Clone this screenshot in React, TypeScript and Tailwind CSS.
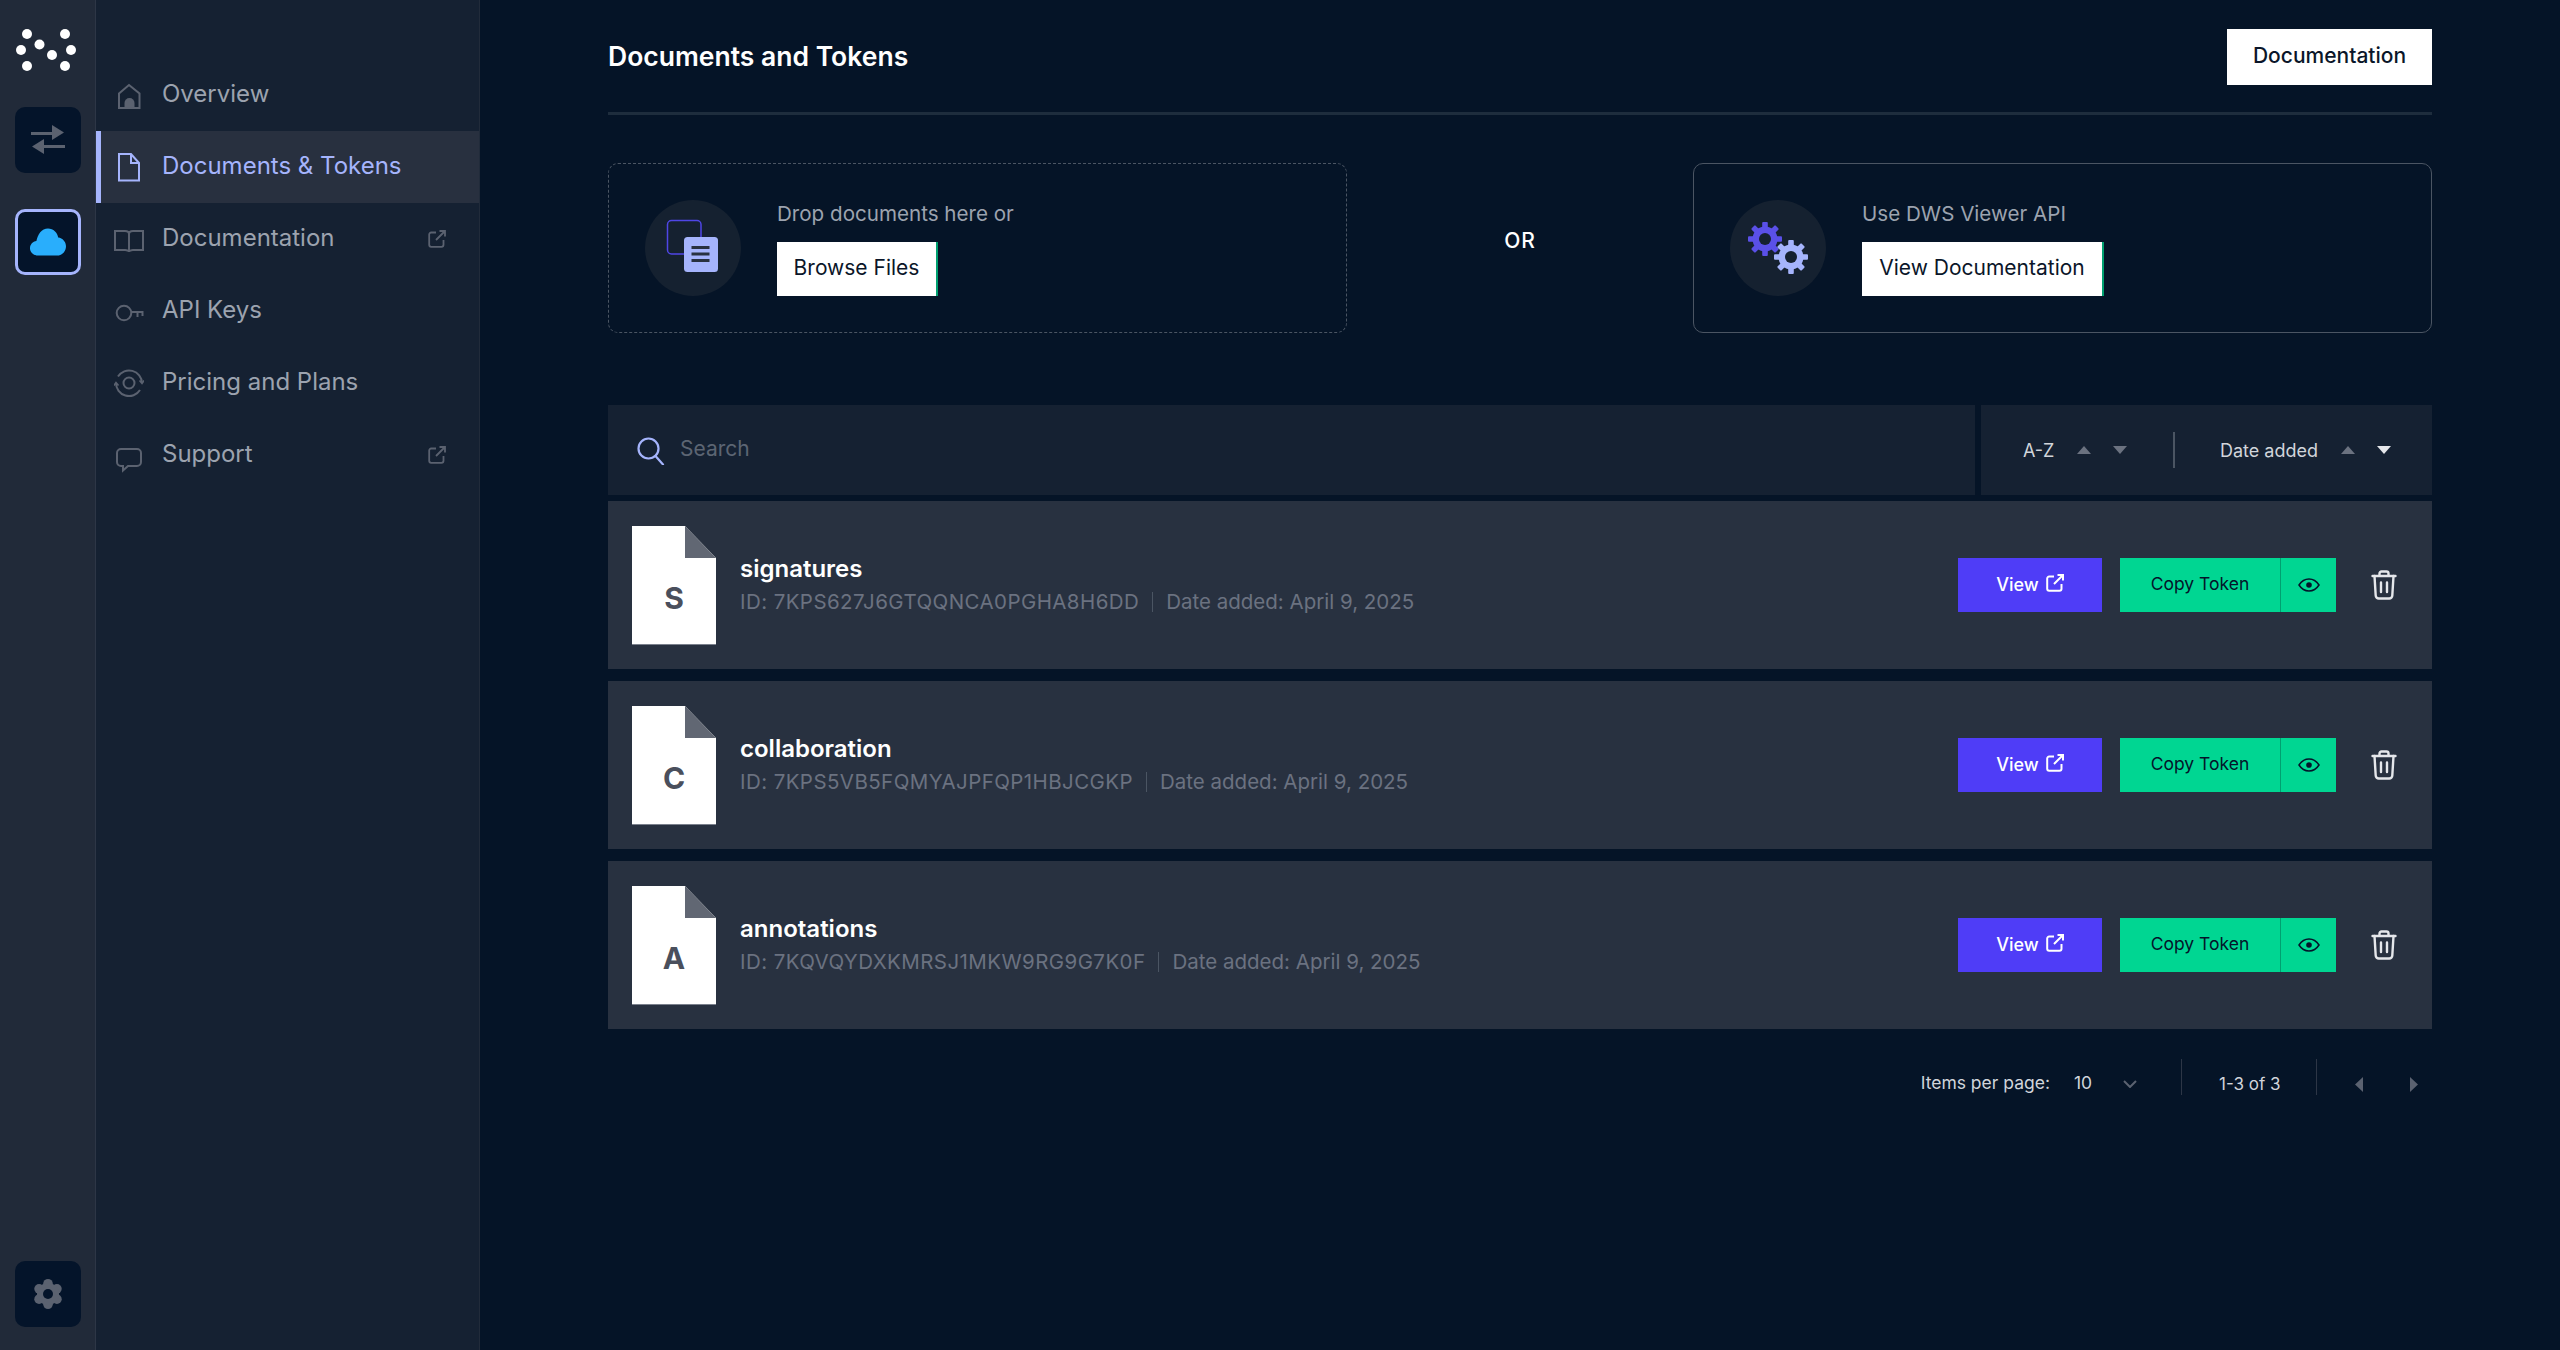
import React from "react";

const font = { fontFamily: "Inter, 'Liberation Sans', sans-serif" };

function Logo() {
  const dots = [[27, 34], [65, 34], [21, 50], [39.5, 44.5], [52, 55], [71, 50], [27, 66], [65, 66]];
  return (
    <svg width="96" height="107" viewBox="0 0 96 107" className="block shrink-0">
      {dots.map(([x, y], i) => <circle key={i} cx={x} cy={y} r="5" fill="#fff" />)}
    </svg>
  );
}

function Swap() {
  return (
    <svg width="36" height="32" viewBox="0 0 36 32" fill="#5b6270">
      <rect x="1" y="8" width="24" height="3" />
      <path d="M22 1L34 8.5 22 16z" />
      <rect x="11" y="21" width="24" height="3" />
      <path d="M14 15L2 22.5 14 30z" />
    </svg>
  );
}

function Cloud() {
  return (
    <svg width="38" height="30" viewBox="0 0 38 30" fill="#29aefc">
      <path d="M9 28.500C4.200 28.500 1 25.300 1 21.300c0-3.800 2.800-6.700 6.400-7.200C8.600 7.600 12.600 1.500 19 1.500c5.400 0 9.400 4.200 10.200 9 4.400.4 7.800 4.400 7.800 8.800 0 5-3.600 9.200-8.400 9.200z" />
    </svg>
  );
}

function RailGear() {
  const a = [-90, -30, 30, 90, 150, 210];
  return (
    <svg width="30" height="32" viewBox="-15 -16 30 32">
      {a.map((d) => (
        <circle key={d} cx={10.3 * Math.cos((d * Math.PI) / 180)} cy={10.3 * Math.sin((d * Math.PI) / 180)} r="4.8" fill="#5b6270" />
      ))}
      <circle r="11" fill="#5b6270" />
      <circle r="5" fill="#04142a" />
    </svg>
  );
}

const navStroke = { fill: "none", stroke: "currentColor", strokeWidth: 2 };

function HomeIcon() {
  return (
    <svg width="30" height="30" viewBox="0 0 30 30" {...navStroke}>
      <path d="M5 13.500L15 5l10.500 8.500V28H5z" />
      <path d="M10.500 28v-5a5 5 0 0 1 10 0v5z" fill="currentColor" stroke="none" />
    </svg>
  );
}
function DocIcon() {
  return (
    <svg width="30" height="30" viewBox="0 0 30 30" {...navStroke}>
      <path d="M5 2h12l8 9v17.500H5z" />
      <path d="M17 2v9h8" />
    </svg>
  );
}
function BookIcon() {
  return (
    <svg width="30" height="30" viewBox="0 0 30 30" {...navStroke}>
      <path d="M1 7h10c2.500 0 4 1.400 4 3 0-1.600 1.500-3 4-3h10v19H19c-2 0-4 1-4 2 0-1-2-2-4-2H1z" />
      <path d="M15 10v18" />
    </svg>
  );
}
function KeyIcon() {
  return (
    <svg width="30" height="30" viewBox="0 0 30 30" {...navStroke}>
      <circle cx="10" cy="17" r="7.300" />
      <path d="M17 16h12.500M23.500 16v5M28.500 16v4" />
    </svg>
  );
}
function PriceIcon() {
  return (
    <svg width="30" height="30" viewBox="0 0 30 30" {...navStroke}>
      <circle cx="15" cy="15" r="5.500" />
      <path d="M4 8.500A13 13 0 0 1 28 15" />
      <path d="M26 22A13 13 0 0 1 2 15" />
      <path d="M25.500 12.500L28 15.500l2-3M0 17.500L2 14.500l2.500 3" strokeWidth="1.600" />
    </svg>
  );
}
function ChatIcon() {
  return (
    <svg width="30" height="30" viewBox="0 0 30 30" className="overflow-visible" {...navStroke}>
      <path d="M7 9h16a4 4 0 0 1 4 4v9a4 4 0 0 1-4 4h-9l-5 4.500V26H7a4 4 0 0 1-4-4v-9a4 4 0 0 1 4-4z" />
    </svg>
  );
}
function ExtIcon({ size = 18, w = 1.8 }: { size?: number; w?: number }) {
  return (
    <svg width={size} height={size} viewBox="0 0 18 18" fill="none" stroke="currentColor" strokeWidth={w} className="shrink-0">
      <path d="M8 2.500H3.200a2 2 0 0 0-2 2v10.300a2 2 0 0 0 2 2h10.300a2 2 0 0 0 2-2V10" />
      <path d="M11.500 1H17v5.500M17 1L8 10" />
    </svg>
  );
}

function NavItem({ icon, label, active, ext }: { icon: React.ReactNode; label: string; active?: boolean; ext?: boolean }) {
  return (
    <div
      className={
        active
          ? "flex h-[72px] items-center border-l-[5px] border-[#a5b4fc] bg-[#28303f] pl-[13px] pr-[33px] text-[#a5b4fc]"
          : "flex h-[72px] items-center border-l-[5px] border-transparent pl-[13px] pr-[33px] text-[#5b6270]"
      }
    >
      <span className="flex w-[30px] shrink-0 items-center justify-center">{icon}</span>
      <span className={active ? "mb-[2px] ml-[18px] flex-1 text-[24px] leading-[32px] text-[#a5b4fc]" : "mb-[2px] ml-[18px] flex-1 text-[24px] leading-[32px] text-[#9ca3af]"}>{label}</span>
      {ext && <ExtIcon />}
    </div>
  );
}

function StackIcon() {
  return (
    <svg width="96" height="96" viewBox="0 0 96 96">
      <rect x="22.500" y="20.500" width="33.500" height="33.500" rx="4" fill="none" stroke="#4f46e5" strokeWidth="1.500" />
      <rect x="39" y="37" width="34" height="35" rx="3.500" fill="#a5b4fc" />
      <path d="M46.500 47.500h18M46.500 54h18M46.500 60.500h18" stroke="#283140" strokeWidth="3" />
    </svg>
  );
}

function Gear({ cx, cy, r, color }: { cx: number; cy: number; r: number; color: string }) {
  const angles = [0, 45, 90, 135, 180, 225, 270, 315];
  return (
    <g transform={`translate(${cx} ${cy})`}>
      {angles.map((a) => (
        <rect key={a} x={-2.8} y={-r} width={5.6} height={r} rx={1} fill={color} transform={`rotate(${a})`} />
      ))}
      <circle r={r - 4.5} fill={color} />
      <circle r={r - 11} fill="#152130" />
    </g>
  );
}

function GearsIcon() {
  return (
    <svg width="96" height="96" viewBox="0 0 96 96">
      <Gear cx={35} cy={39} r={17} color="#5a50e8" />
      <Gear cx={61} cy={57} r={17} color="#a5b4fc" />
    </svg>
  );
}

function Tri({ dir, color }: { dir: "up" | "down" | "left" | "right"; color: string }) {
  if (dir === "up") return <svg width="14" height="8" viewBox="0 0 14 8" fill={color} className="block shrink-0"><path d="M7 0l7 8H0z" /></svg>;
  if (dir === "down") return <svg width="14" height="8" viewBox="0 0 14 8" fill={color} className="block shrink-0"><path d="M0 0h14L7 8z" /></svg>;
  if (dir === "left") return <svg width="8" height="15" viewBox="0 0 8 15" fill={color} className="block shrink-0"><path d="M8 0v15L0 7.500z" /></svg>;
  return <svg width="8" height="15" viewBox="0 0 8 15" fill={color} className="block shrink-0"><path d="M0 0v15l8-7.500z" /></svg>;
}

function FileBadge({ letter }: { letter: string }) {
  return (
    <div className="relative h-[119px] w-[84px] shrink-0">
      <svg width="84" height="119" viewBox="0 0 84 119" className="block">
        <path d="M0 0h53l31 32v87H0z" fill="#fff" />
        <path d="M53 0l31 32H53z" fill="#616773" />
        <rect x="0" y="118" width="84" height="1" fill="#7a808c" />
      </svg>
      <span className="absolute inset-x-0 top-[56px] text-center text-[30px] font-bold leading-[32px] text-[#4a4f5c]">{letter}</span>
    </div>
  );
}

function Eye() {
  return (
    <svg width="22" height="14" viewBox="0 0 22 14" fill="none" stroke="#04142a" strokeWidth="1.500">
      <path d="M1 7c2.500-3.900 6-6 10-6s7.500 2.100 10 6c-2.500 3.900-6 6-10 6S3.500 10.900 1 7z" />
      <circle cx="11" cy="7" r="2.800" fill="#04142a" stroke="none" />
    </svg>
  );
}

function Trash() {
  return (
    <svg width="26" height="30" viewBox="0 0 26 30" fill="none" stroke="#e5e7eb" strokeWidth="2.400" strokeLinecap="round" strokeLinejoin="round" className="shrink-0">
      <path d="M8.500 5V3.500a2 2 0 0 1 2-2h5a2 2 0 0 1 2 2V5" />
      <path d="M1.500 6h23" />
      <path d="M3.500 6l1.200 19.500a3 3 0 0 0 3 3h10.600a3 3 0 0 0 3-3L22.500 6" />
      <path d="M10 12.500v9.500M16 12.500v9.500" />
    </svg>
  );
}

function Row({ letter, name, id, last }: { letter: string; name: string; id: string; last?: boolean }) {
  return (
    <div className={last ? "flex h-[168px] items-center bg-[#283140] pl-[24px] pr-[35px]" : "mb-[12px] flex h-[168px] items-center bg-[#283140] pl-[24px] pr-[35px]"}>
      <FileBadge letter={letter} />
      <div className="ml-[24px] flex-1 pt-[2px]">
        <div className="h-[32px] text-[24px] font-semibold leading-[30px] text-white">{name}</div>
        <div className="flex h-[32px] items-center text-[20.5px] leading-[32px] text-[#6b7280]">
          <span className="tracking-[0.42px]">ID: {id}</span>
          <span className="mx-[13px] h-[20px] w-px bg-[#4b5563]" />
          <span>Date added: April 9, 2025</span>
        </div>
      </div>
      <div className="flex h-[54px] w-[144px] items-center justify-center gap-[7px] bg-[#4f3df7] text-[18px] font-medium text-white">
        <span className="mb-[2px]">View</span>
        <span className="mb-[4px]"><ExtIcon size={18} w={2} /></span>
      </div>
      <div className="ml-[18px] flex h-[54px] w-[216px] items-center bg-[#00d692] text-[17.500px] text-[#04142a]">
        <span className="h-[54px] w-[161px] border-r border-[#00a070] text-center leading-[52px]">Copy Token</span>
        <span className="flex flex-1 items-center justify-center"><Eye /></span>
      </div>
      <div className="ml-[35px]"><Trash /></div>
    </div>
  );
}

export default function App() {
  return (
    <div style={font} className="flex h-[1350px] w-[2560px] overflow-hidden bg-[#051427]">
      <aside className="flex h-full w-[96px] shrink-0 flex-col items-center border-r border-[#2d3646] bg-[#212a39]">
        <Logo />
        <div className="flex h-[66px] w-[66px] shrink-0 items-center justify-center rounded-[10px] bg-[#04142a]"><Swap /></div>
        <div className="mt-[36px] flex h-[66px] w-[66px] shrink-0 items-center justify-center rounded-[10px] border-[3px] border-[#a5b4fc] bg-[#04142a]"><Cloud /></div>
        <div className="mb-[23px] mt-auto flex h-[66px] w-[66px] shrink-0 items-center justify-center rounded-[10px] bg-[#04142a]"><RailGear /></div>
      </aside>
      <nav className="h-full w-[384px] shrink-0 border-r border-[#212b3a] bg-[#152132] pt-[59px]">
        <NavItem icon={<HomeIcon />} label="Overview" />
        <NavItem icon={<DocIcon />} label="Documents & Tokens" active />
        <NavItem icon={<BookIcon />} label="Documentation" ext />
        <NavItem icon={<KeyIcon />} label="API Keys" />
        <NavItem icon={<PriceIcon />} label="Pricing and Plans" />
        <NavItem icon={<ChatIcon />} label="Support" ext />
      </nav>
      <main className="flex h-full flex-1 flex-col pl-[128px] pr-[128px]">
        <header className="flex h-[115px] shrink-0 items-start justify-between border-b-[3px] border-[#1e2d3d] pt-[29px]">
          <h1 className="mt-[10px] text-[26.500px] font-semibold leading-[34px] text-white">Documents and Tokens</h1>
          <div className="flex h-[56px] w-[205px] items-center justify-center bg-white pb-[2px] text-[21px] font-medium text-[#0b1629]">Documentation</div>
        </header>
        <section className="mt-[48px] flex h-[170px] shrink-0 items-center">
          <div className="flex h-full w-[739px] items-center rounded-[10px] border border-dashed border-[#4b5563] pl-[36px]">
            <div className="h-[96px] w-[96px] shrink-0 rounded-full bg-[#152130]"><StackIcon /></div>
            <div className="ml-[36px]">
              <div className="text-[20.600px] leading-[28px] text-[#9ca3af]">Drop documents here or</div>
              <div className="mt-[14px] flex h-[54px] w-[161px] items-center justify-center border-r-2 border-[#00a070] bg-white pb-[2px] text-[21px] text-[#0b1629]">Browse Files</div>
            </div>
          </div>
          <div className="flex-1 pb-[15px] text-center text-[21px] font-medium tracking-[1px] text-white">OR</div>
          <div className="flex h-full w-[739px] items-center rounded-[10px] border border-[#4b5563] pl-[36px]">
            <div className="h-[96px] w-[96px] shrink-0 rounded-full bg-[#152130]"><GearsIcon /></div>
            <div className="ml-[36px]">
              <div className="text-[20.600px] leading-[28px] text-[#9ca3af]">Use DWS Viewer API</div>
              <div className="mt-[14px] flex h-[54px] w-[242px] items-center justify-center border-r-2 border-[#00a070] bg-white pb-[2px] text-[21px] text-[#0b1629]">View Documentation</div>
            </div>
          </div>
        </section>
        <section className="mt-[72px] flex h-[90px] shrink-0 gap-[6px]">
          <div className="flex flex-1 items-center bg-[#152132] pl-[29px]">
            <svg width="28" height="28" viewBox="0 0 28 28" fill="none" stroke="#a5b4fc" strokeWidth="2.200" className="mt-[2px] shrink-0">
              <circle cx="11.500" cy="11.500" r="10" />
              <path d="M18.500 19l7.500 8.500" strokeLinecap="round" />
            </svg>
            <span className="mb-[3px] ml-[15px] text-[21px] text-[#5c6573]">Search</span>
          </div>
          <div className="flex w-[451px] items-center whitespace-nowrap bg-[#152132] pl-[42px] text-[18px] text-[#d1d5db]">
            <span className="w-[31px]">A-Z</span>
            <span className="ml-[23px]"><Tri dir="up" color="#6b7280" /></span>
            <span className="ml-[22px]"><Tri dir="down" color="#6b7280" /></span>
            <span className="ml-[46px] h-[36px] w-[2px] bg-[#4b5563]" />
            <span className="ml-[45px] w-[97px]">Date added</span>
            <span className="ml-[24px]"><Tri dir="up" color="#6b7280" /></span>
            <span className="ml-[22px]"><Tri dir="down" color="#e5e7eb" /></span>
          </div>
        </section>
        <section className="mt-[6px] shrink-0">
          <Row letter="S" name="signatures" id="7KPS627J6GTQQNCA0PGHA8H6DD" />
          <Row letter="C" name="collaboration" id="7KPS5VB5FQMYAJPFQP1HBJCGKP" />
          <Row letter="A" name="annotations" id="7KQVQYDXKMRSJ1MKW9RG9G7K0F" last />
        </section>
        <footer className="mt-[30px] flex h-[48px] shrink-0 items-center justify-end whitespace-nowrap pr-[14px] text-[17.500px] text-[#d1d5db]">
          <span>Items per page:</span>
          <span className="ml-[24px] w-[19px]">10</span>
          <svg width="14" height="8" viewBox="0 0 14 8" fill="none" stroke="#5b6270" strokeWidth="2" className="ml-[30px] mt-[2px] shrink-0"><path d="M1 1l6 6 6-6" /></svg>
          <span className="ml-[44px] h-[36px] w-px self-start bg-[#2d3646]" />
          <span className="ml-[37px] mt-[3px] w-[60px] text-[17px]">1-3 of 3</span>
          <span className="ml-[37px] h-[36px] w-px self-start bg-[#2d3646]" />
          <span className="ml-[38px] mt-[2px]"><Tri dir="left" color="#5b6270" /></span>
          <span className="ml-[47px] mt-[2px]"><Tri dir="right" color="#5b6270" /></span>
        </footer>
      </main>
    </div>
  );
}
